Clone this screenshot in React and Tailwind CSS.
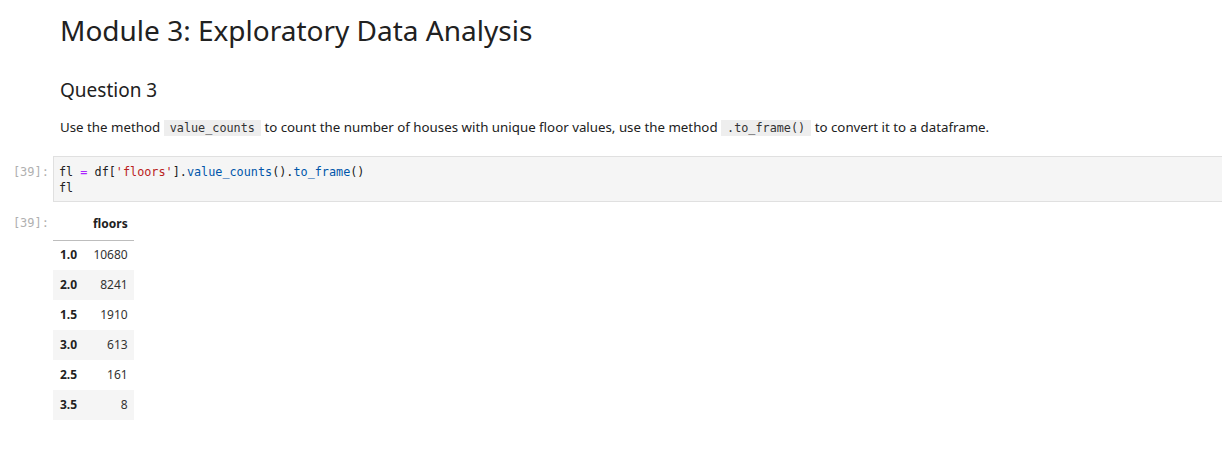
import React from "react";

const sans = { fontFamily: '"Noto Sans", "Open Sans", sans-serif' };
const mono = { fontFamily: '"DejaVu Sans Mono", "Liberation Mono", monospace' };

const rows = [
  ["1.0", "10680"],
  ["2.0", "8241"],
  ["1.5", "1910"],
  ["3.0", "613"],
  ["2.5", "161"],
  ["3.5", "8"],
];

export default function App() {
  return (
    <div className="w-[1222px] h-[455px] bg-white text-[#212121] overflow-hidden" style={sans}>
      <div className="pl-[60px] pt-[11px]">
        <h1 className="text-[28px] leading-[38px] font-normal text-[#212121]">Module 3: Exploratory Data Analysis</h1>
        <h2 className="mt-[28px] text-[19px] leading-[26px] font-normal">Question 3</h2>
        <p className="mt-[15px] text-[13.3px] leading-[18px] text-[#212121]">
          Use the method{" "}
          <code className="bg-[#eeeeee] px-[6px] py-[1px] text-[11.8px] text-[#333]" style={mono}>value_counts</code>{" "}
          to count the number of houses with unique floor values, use the method{" "}
          <code className="bg-[#eeeeee] px-[6px] py-[1px] text-[11.8px] text-[#333]" style={mono}>.to_frame()</code>{" "}
          to convert it to a dataframe.
        </p>
      </div>

      <div className="flex mt-[19px]">
        <div className="w-[53px] shrink-0 pr-[4px] pt-[8px] text-right text-[12px] leading-[16px] text-[#b0b0b0]" style={mono}>[39]:</div>
        <div className="flex-1 bg-[#f5f5f5] border border-r-0 border-[#e0e0e0] h-[46px] px-[5px] pt-[7px] text-[11.8px] leading-[16px] text-[#212121]" style={mono}>
          <div>
            fl <span className="text-[#aa22ff]">=</span> df[<span className="text-[#ba2121]">'floors'</span>].<span className="text-[#0055aa]">value_counts</span>().<span className="text-[#0055aa]">to_frame</span>()
          </div>
          <div>fl</div>
        </div>
      </div>

      <div className="flex mt-[10px]">
        <div className="w-[53px] shrink-0 pr-[4px] pt-[4px] text-right text-[12px] leading-[15px] text-[#b0b0b0]" style={mono}>[39]:</div>
        <table className="text-[12px] border-collapse">
          <thead>
            <tr className="border-b border-[#bdbdbd]">
              <th className="w-[36px] h-[28px]"></th>
              <th className="pl-[4px] pr-[6px] pb-[4px] text-right font-bold text-[#212121]">floors</th>
            </tr>
          </thead>
          <tbody>
            {rows.map(([k, v], i) => (
              <tr key={k} className={i % 2 === 1 ? "bg-[#f5f5f5]" : ""}>
                <th className="h-[30px] pl-[7px] text-left font-bold text-[#212121]">{k}</th>
                <td className="pr-[6px] pl-[4px] text-right text-[#333]">{v}</td>
              </tr>
            ))}
          </tbody>
        </table>
      </div>
    </div>
  );
}
